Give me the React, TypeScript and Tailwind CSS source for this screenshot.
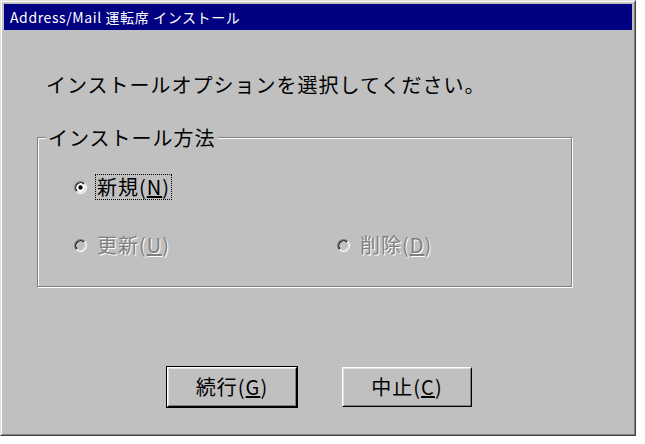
const jp = { fontFamily: '"Noto Sans CJK JP", "Liberation Sans", sans-serif' }

function Radio({ checked = false, disabled = false }: { checked?: boolean; disabled?: boolean }) {
  return (
    <svg width="13" height="13" viewBox="0 0 12 12" className="shrink-0">
      <circle cx="6" cy="6" r="4.5" fill={disabled ? '#c0c0c0' : '#ffffff'} />
      <path d="M2.11 9.89 A5.5 5.5 0 0 1 9.89 2.11" fill="none" stroke="#808080" />
      <path d="M9.89 2.11 A5.5 5.5 0 0 1 2.11 9.89" fill="none" stroke="#ffffff" />
      <path d="M2.82 9.18 A4.5 4.5 0 0 1 9.18 2.82" fill="none" stroke="#000000" />
      <path d="M9.18 2.82 A4.5 4.5 0 0 1 2.82 9.18" fill="none" stroke="#dfdfdf" />
      {checked && <circle cx="6" cy="6" r="2" fill="#000000" />}
    </svg>
  )
}

function Option({
  label,
  mnemonic,
  checked = false,
  disabled = false,
  focused = false,
}: {
  label: string
  mnemonic: string
  checked?: boolean
  disabled?: boolean
  focused?: boolean
}) {
  return (
    <div className="flex items-center h-[26px]">
      <Radio checked={checked} disabled={disabled} />
      <div
        className={`ml-[8px] h-[26px] flex items-center px-[1px] border border-dotted ${
          focused ? 'border-black' : 'border-transparent'
        } ${disabled ? 'text-[#808080] [text-shadow:1px_1px_0_#ffffff]' : 'text-black'}`}
      >
        <span className="text-[20px] leading-[24px] tracking-[1px]" style={jp}>
          {label}(<u>{mnemonic}</u>)
        </span>
      </div>
    </div>
  )
}

function Button({ label, mnemonic, isDefault = false }: { label: string; mnemonic: string; isDefault?: boolean }) {
  return (
    <div className={`w-[132px] h-[42px] border ${isDefault ? 'border-black' : 'border-transparent'}`}>
      <div className="w-full h-full border border-t-white border-l-white border-r-black border-b-black">
        <div className="w-full h-full border border-t-[#dfdfdf] border-l-[#dfdfdf] border-r-[#808080] border-b-[#808080] flex items-center justify-center">
          <span className="text-[20px] leading-[24px] tracking-[1px] text-black" style={jp}>
            {label}(<u>{mnemonic}</u>)
          </span>
        </div>
      </div>
    </div>
  )
}

export default function App() {
  return (
    <div className="w-[645px] h-[444px] bg-white">
      <div className="w-[636px] h-[436px] border border-t-[#dfdfdf] border-l-[#dfdfdf] border-r-[#404040] border-b-[#404040]">
        <div className="w-full h-full border border-t-white border-l-white border-r-[#808080] border-b-[#808080] bg-[#c0c0c0] p-[2px] flex flex-col">
          {/* Title bar */}
          <div className="h-[26px] bg-[#000080] flex items-center pl-[6px]">
            <span className="text-white text-[14px] leading-[18px] tracking-[0.6px]" style={jp}>
              Address/Mail 運転席 インストール
            </span>
          </div>

          {/* Body */}
          <div className="flex-1 flex flex-col">
            <p className="mt-[43px] ml-[42px] text-[20px] leading-[24px] tracking-[1px] text-black" style={jp}>
              インストールオプションを選択してください。
            </p>

            {/* Group box */}
            <div className="relative mt-[40px] ml-[33px] w-[535px] h-[150px] border border-[#808080] shadow-[1px_1px_0_#ffffff,inset_1px_1px_0_#ffffff]">
              <div className="absolute -top-[12px] left-[8px] px-[2px] bg-[#c0c0c0] text-[20px] leading-[24px] tracking-[1px] text-black" style={jp}>
                インストール方法
              </div>
              <div className="pt-[36px] pl-[36px] flex flex-col gap-[32px]">
                <Option label="新規" mnemonic="N" checked focused />
                <div className="grid grid-cols-[263px_1fr]">
                  <Option label="更新" mnemonic="U" disabled />
                  <Option label="削除" mnemonic="D" disabled />
                </div>
              </div>
            </div>

            {/* Buttons */}
            <div className="mt-[79px] pl-[162px] flex gap-[43px]">
              <Button label="続行" mnemonic="G" isDefault />
              <Button label="中止" mnemonic="C" />
            </div>
          </div>
        </div>
      </div>
    </div>
  )
}
